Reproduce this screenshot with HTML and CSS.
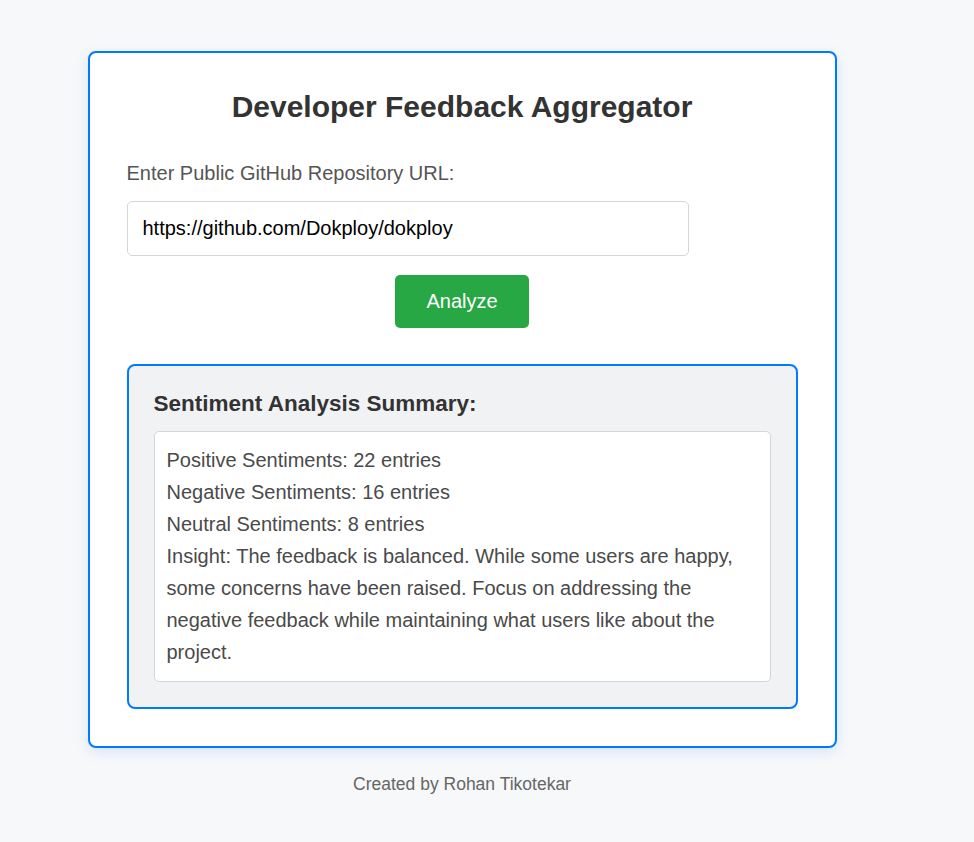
FILE: index.html
```html
<!DOCTYPE html>
<html lang="en">
<head>
<meta charset="utf-8">
<title>Developer Feedback Aggregator</title>
<link rel="stylesheet" href="styles.css">
</head>
<body>
<div class="page">
  <main class="card">
    <h1 class="title">Developer Feedback Aggregator</h1>
    <label class="label" for="repo">Enter Public GitHub Repository URL:</label>
    <input class="input" id="repo" type="text" value="https://github.com/Dokploy/dokploy">
    <div class="actions">
      <button class="btn" type="button">Analyze</button>
    </div>
    <section class="results">
      <h3 class="results-title">Sentiment Analysis Summary:</h3>
      <div class="results-body">
        <div>Positive Sentiments: 22 entries</div>
        <div>Negative Sentiments: 16 entries</div>
        <div>Neutral Sentiments: 8 entries</div>
        <div>Insight: The feedback is balanced. While some users are happy, some concerns have been raised. Focus on addressing the negative feedback while maintaining what users like about the project.</div>
      </div>
    </section>
  </main>
  <footer class="footer">Created by Rohan Tikotekar</footer>
</div>
</body>
</html>
```

FILE: styles.css
```css
* { box-sizing: border-box; }
html, body { margin: 0; padding: 0; }
body {
  background: #f7f8fa;
  font-family: "Liberation Sans", Arial, sans-serif;
  color: #333;
}
.page {
  width: 924px;
  padding-top: 51px;
  display: flex;
  flex-direction: column;
  align-items: center;
}
.card {
  width: 749px;
  background: #fff;
  border: 2px solid #007bff;
  border-radius: 8px;
  padding: 37px;
  box-shadow: 0 4px 14px rgba(0, 123, 255, 0.14);
  display: flex;
  flex-direction: column;
}
.title {
  margin: 0 0 38px;
  font-size: 30px;
  line-height: 34px;
  font-weight: bold;
  text-align: center;
  color: #333;
}
.label {
  display: block;
  font-size: 20px;
  line-height: 23px;
  color: #555;
  margin-bottom: 16px;
}
.input {
  width: 562px;
  height: 55px;
  padding: 0 15px;
  border: 1px solid #d3d6db;
  border-radius: 5px;
  font-family: "Liberation Sans", Arial, sans-serif;
  font-size: 20px;
  color: #000;
  background: #fff;
  outline: none;
}
.actions {
  display: flex;
  justify-content: center;
  margin-top: 19px;
}
.btn {
  width: 134px;
  height: 53px;
  border: none;
  border-radius: 5px;
  background: #28a745;
  color: #fff;
  font-family: "Liberation Sans", Arial, sans-serif;
  font-size: 20px;
  cursor: pointer;
}
.results {
  margin-top: 36px;
  border: 2px solid #007bff;
  border-radius: 8px;
  background: #f1f2f4;
  padding: 25px;
}
.results-title {
  margin: 0 0 14px;
  font-size: 22.5px;
  line-height: 26px;
  font-weight: bold;
  color: #333;
}
.results-body {
  background: #fff;
  border: 1px solid #d3d6db;
  border-radius: 5px;
  padding: 12px 12px 13px;
  font-size: 20px;
  line-height: 32px;
  color: #4a4a4a;
}
.footer {
  margin-top: 26px;
  font-size: 17.5px;
  line-height: 20px;
  color: #666;
  text-align: center;
}
```
